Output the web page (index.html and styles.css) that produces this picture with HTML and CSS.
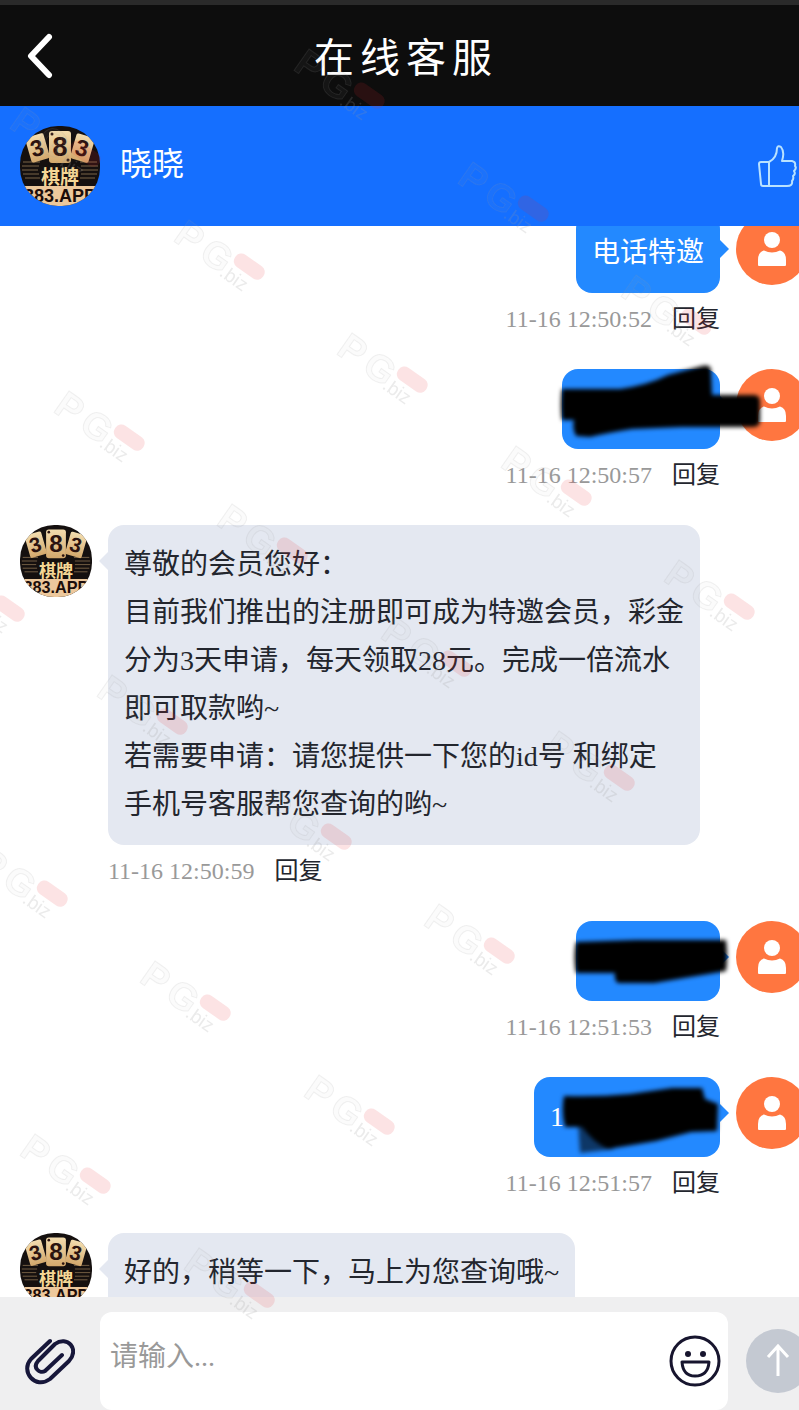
FILE: index.html
```
<!DOCTYPE html>
<html lang="zh-CN">
<head>
    <meta charset="utf-8">
    <title>在线客服</title>
    <meta name="viewport" content="width=device-width, initial-scale=1">
    <link rel="stylesheet" href="styles.css">
</head>
<body>

<!-- shared symbols -->
<svg class="defs" aria-hidden="true">
  <defs>
    <clipPath id="round"><rect x="0" y="0" width="80" height="80" rx="38"/></clipPath>
    <linearGradient id="gold" x1="0" y1="0" x2="0" y2="1">
      <stop offset="0" stop-color="#f3dcae"/>
      <stop offset="1" stop-color="#d3a86c"/>
    </linearGradient>
    <symbol id="logo" viewBox="0 0 80 80">
      <g clip-path="url(#round)">
        <rect width="80" height="80" fill="#15100f"/>
        <g stroke="#7b6448" stroke-width="1">
          <path d="M3 36h17M2 40h17M2 44h16M3 48h16M5 52h15M60 36h17M61 40h17M61 44h17M61 48h16M60 52h15"/>
        </g>
        <g fill="url(#gold)">
          <rect x="8" y="9" width="19" height="26" rx="2" transform="rotate(-16 17 22)"/>
          <rect x="53" y="9" width="19" height="26" rx="2" transform="rotate(16 62 22)"/>
          <rect x="29" y="5" width="22" height="32" rx="3"/>
        </g>
        <g class="logo-num" fill="#2b1310">
          <text x="17" y="30" font-size="23" transform="rotate(-16 17 22)">3</text>
          <text x="40" y="30" font-size="27">8</text>
          <text x="62" y="30" font-size="23" transform="rotate(16 62 22)">3</text>
        </g>
        <circle cx="32" cy="8" r="1.500" fill="#2b1310"/>
        <circle cx="48" cy="34" r="1.500" fill="#2b1310"/>
        <text class="logo-cn" x="40" y="58" font-size="19">棋牌</text>
        <rect y="60" width="80" height="20" fill="#edc89c"/>
        <text class="logo-num" x="40" y="76" font-size="18" fill="#1c0d0a">383.APP</text>
      </g>
    </symbol>
    <symbol id="user" viewBox="0 0 72 72">
      <circle cx="36" cy="36" r="36" fill="#ff7640"/>
      <circle cx="36" cy="27" r="8" fill="#fff"/>
      <path d="M22 52V47q0-8 6-9.500q8 4 16 0q6 1.500 6 9.500v5q0 1-1 1H23q-1 0-1-1z" fill="#fff"/>
    </symbol>
    <g id="mark">
      <g transform="translate(2 25) rotate(35)">
        <text class="mark-pg" x="0" y="0">P</text>
        <text class="mark-pg" x="31" y="0">G</text>
        <text class="mark-biz" x="58" y="2">.biz</text>
      </g>
      <rect x="62" y="44" width="34" height="15" rx="7" transform="rotate(35 79 52)" fill="#e8242c" fill-opacity=".13"/>
    </g>
  </defs>
</svg>

<div class="app">
  <header class="topbar">
    <button class="back" type="button" aria-label="返回">
      <svg width="26" height="46" viewBox="0 0 26 46"><path d="M22 4L4 23L22 42" fill="none" stroke="#fff" stroke-width="6" stroke-linecap="round" stroke-linejoin="round"/></svg>
    </button>
    <h1>在线客服</h1>
  </header>

  <div class="agent">
    <svg class="agent-pic"><use href="#logo"/></svg>
    <span class="agent-name">晓晓</span>
    <button class="like" type="button" aria-label="点赞">
      <svg width="40" height="44" viewBox="0 0 40 44" fill="none" stroke="#b9e2ff" stroke-width="2" stroke-linejoin="round">
        <path d="M1 20Q1 18 3 18H11V42H5Q3 42 3 40z"/>
        <path d="M11 18Q19 14 19 4Q20 1 23 3Q27 8 24 17H34Q38 18 37 22Q39 24 36 27Q38 30 35 32Q36 35 34 37Q35 42 29 42H11"/>
      </svg>
    </button>
  </div>

  <main class="chat">
    <ul class="list">
      <li class="msg mine">
        <svg class="pic"><use href="#user"/></svg>
        <div class="body">
          <div class="bubble">电话特邀</div>
          <div class="meta"><time>11-16 12:50:52</time><button type="button">回复</button></div>
        </div>
      </li>
      <li class="msg mine">
        <svg class="pic"><use href="#user"/></svg>
        <div class="body">
          <div class="bubble medium">
            <svg class="scribble" viewBox="0 0 158 80"><path d="M0 20H58Q86 16 106 6L140-3Q149-5 149 2L150 26H192Q198 26 198 32V52Q198 58 190 58H120L70 60Q44 64 28 68L14 67Q10 60 12 51H0Q-2 36 0 20z"/></svg>
          </div>
          <div class="meta"><time>11-16 12:50:57</time><button type="button">回复</button></div>
        </div>
      </li>
      <li class="msg">
        <svg class="pic"><use href="#logo"/></svg>
        <div class="body">
          <div class="bubble">尊敬的会员您好：<br>目前我们推出的注册即可成为特邀会员，彩金分为3天申请，每天领取28元。完成一倍流水即可取款哟~<br>若需要申请：请您提供一下您的id号 和绑定手机号客服帮您查询的哟~</div>
          <div class="meta"><time>11-16 12:50:59</time><button type="button">回复</button></div>
        </div>
      </li>
      <li class="msg mine">
        <svg class="pic"><use href="#user"/></svg>
        <div class="body">
          <div class="bubble short">
            <svg class="scribble" viewBox="0 0 144 80"><path d="M0 21L60 19H150Q152 36 150 50L108 57L78 62H42Q38 60 39 52H0Q-3 36 0 21z"/></svg>
          </div>
          <div class="meta"><time>11-16 12:51:53</time><button type="button">回复</button></div>
        </div>
      </li>
      <li class="msg mine">
        <svg class="pic"><use href="#user"/></svg>
        <div class="body">
          <div class="bubble long">1
            <svg class="scribble" viewBox="0 0 186 80"><path fill-opacity=".6" d="M44 46L46 76L80 72L66 48z"/><path d="M30 19Q64 20 96 17L138 11H168L171 22L184 27L183 54L157 55L122 64L74 72Q60 66 48 50H31Q27 34 30 19z"/></svg>
          </div>
          <div class="meta"><time>11-16 12:51:57</time><button type="button">回复</button></div>
        </div>
      </li>
      <li class="msg">
        <svg class="pic"><use href="#logo"/></svg>
        <div class="body">
          <div class="bubble">好的，稍等一下，马上为您查询哦~</div>
        </div>
      </li>
    </ul>
  </main>

  <form class="composer">
    <button class="attach" type="button" aria-label="附件">
      <svg width="50" height="48" viewBox="0 0 50 48" fill="none" stroke="#17173a" stroke-width="4" stroke-linecap="round" stroke-linejoin="round">
        <path d="M25 4L6 22C-5 34 10 53 25 42L44 24C55 12 42-2 30 7L13 24C7 31 15 37 20 34L37 18"/>
      </svg>
    </button>
    <div class="field">
      <textarea aria-label="消息" placeholder="请输入..."></textarea>
      <button class="emoji" type="button" aria-label="表情">
        <svg width="52" height="52" viewBox="0 0 52 52" fill="none" stroke="#17152e" stroke-width="3">
          <circle cx="26" cy="26" r="24"/>
          <path d="M13 27H40Q39 41 26 41Q14 41 13 27z" stroke-linejoin="round"/>
          <g fill="#17152e" stroke="none"><circle cx="19" cy="19" r="3"/><circle cx="34" cy="19" r="3"/></g>
        </svg>
      </button>
    </div>
    <button class="send" type="submit" aria-label="发送">
      <svg width="64" height="64" viewBox="0 0 64 64" fill="none" stroke="#fff" stroke-width="3"><path d="M32 47V18M22 28L32 17L42 28"/></svg>
    </button>
  </form>
</div>

<!-- watermark -->
<svg class="watermark" aria-hidden="true">
  <use href="#mark" x="290" y="44"/><use href="#mark" x="454" y="157"/><use href="#mark" x="617" y="270"/>
  <use href="#mark" x="6" y="102"/><use href="#mark" x="170" y="215"/><use href="#mark" x="333" y="328"/><use href="#mark" x="497" y="441"/><use href="#mark" x="660" y="555"/>
  <use href="#mark" x="50" y="386"/><use href="#mark" x="213" y="499"/><use href="#mark" x="377" y="612"/><use href="#mark" x="540" y="726"/>
  <use href="#mark" x="-70" y="557"/><use href="#mark" x="93" y="670"/><use href="#mark" x="257" y="785"/><use href="#mark" x="420" y="899"/>
  <use href="#mark" x="-27" y="842"/><use href="#mark" x="136" y="956"/><use href="#mark" x="300" y="1070"/>
  <use href="#mark" x="16" y="1129"/><use href="#mark" x="180" y="1243"/>
</svg>

</body>
</html>
```
FILE: styles.css
```
* {
	box-sizing: border-box;
}

body {
	margin: 0;
	overflow: hidden;
	font-family: "Liberation Serif", "Noto Sans CJK SC", serif;
	color: #23262e;
	background: #fff;
}

button {
	padding: 0;
	border: 0;
	background: none;
	font: inherit;
	color: inherit;
	cursor: pointer;
}

svg {
	display: block;
}

.defs {
	position: absolute;
	width: 0;
	height: 0;
}

/* the panel runs a little past the right edge */
.app {
	display: flex;
	flex-direction: column;
	width: calc(100% + 9px);
	height: 100vh;
}

.topbar {
	display: grid;
	grid-template-columns: 80px 1fr 76px;
	align-items: center;
	height: 106px;
	border-top: 5px solid #2a2a2a;
	background: #0d0d0d;
	color: #fff;
}

.back {
	justify-self: center;
}

.topbar h1 {
	margin: 0;
	padding-top: 6px;
	font-size: 40px;
	font-weight: normal;
	letter-spacing: 6px;
	line-height: 60px;
	text-align: center;
}

.agent {
	display: flex;
	align-items: center;
	gap: 20px;
	height: 120px;
	padding: 0 10px 0 20px;
	background: #156fff;
	color: #fff;
}

.agent-pic {
	width: 80px;
	height: 80px;
}

.agent-name {
	flex: 1;
	padding-bottom: 4px;
	font-size: 32px;
	line-height: 48px;
}

.chat {
	flex: 1;
	min-height: 0;
	overflow: hidden;
}

/* scrolled so the first message is partly hidden */
.list {
	margin: -13px 0 0;
	padding: 0;
	list-style: none;
}

.msg {
	display: flex;
	gap: 16px;
	padding-left: 20px;
	margin-bottom: 32px;
}

.msg.mine {
	flex-direction: row-reverse;
}

.pic {
	flex: none;
	width: 72px;
	height: 72px;
}

.body {
	display: flex;
	flex-direction: column;
	align-items: flex-start;
}

.mine .body {
	align-items: flex-end;
}

.bubble {
	position: relative;
	max-width: 592px;
	min-height: 80px;
	padding: 16px;
	border-radius: 16px;
	background: #e4e8f1;
	font-size: 28px;
	line-height: 48px;
}

.bubble::before {
	content: "";
	position: absolute;
	top: 27px;
	left: -9px;
	border: 9px solid transparent;
	border-left: 0;
	border-right-color: #e4e8f1;
}

.mine .bubble {
	background: #2389ff;
	color: #fff;
}

.mine .bubble::before {
	left: auto;
	right: -9px;
	border: 9px solid transparent;
	border-right: 0;
	border-left-color: #2389ff;
}

.bubble.short {
	width: 144px;
}

.bubble.medium {
	width: 158px;
}

.bubble.long {
	width: 186px;
}

.scribble {
	position: absolute;
	top: 0;
	left: 0;
	width: 100%;
	height: 100%;
	overflow: visible;
	filter: blur(2px);
}

.meta {
	display: flex;
	gap: 20px;
	margin-top: 8px;
	font-size: 24px;
	line-height: 36px;
}

.meta time {
	color: #999;
}

.composer {
	display: flex;
	height: 113px;
	padding-top: 15px;
	background: #efeff0;
}

.attach {
	display: flex;
	justify-content: center;
	align-items: center;
	width: 100px;
}

.field {
	display: flex;
	flex: 1;
	align-items: center;
	padding-right: 7px;
	border-radius: 12px;
	background: #fff;
}

.field textarea {
	flex: 1;
	min-width: 0;
	height: 98px;
	padding: 21px 10px;
	border: 0;
	outline: 0;
	resize: none;
	background: none;
	font: inherit;
	font-size: 28px;
	line-height: 48px;
}

.field textarea::placeholder {
	color: #999;
}

.send {
	align-self: center;
	width: 64px;
	height: 64px;
	margin: 0 -2px 0 18px;
	border-radius: 50%;
	background: #c4c9d2;
}

.logo-num {
	font-family: "Liberation Sans", sans-serif;
	font-weight: bold;
	text-anchor: middle;
}

.logo-cn {
	font-family: "Noto Sans CJK SC", sans-serif;
	font-weight: bold;
	text-anchor: middle;
	fill: #f5d795;
}

.watermark {
	position: fixed;
	top: 0;
	left: 0;
	width: 100%;
	height: 100%;
	pointer-events: none;
}

.mark-pg {
	font: bold 38px "Liberation Sans", sans-serif;
	fill: #aaa;
	fill-opacity: .05;
	stroke: #999;
	stroke-opacity: .14;
}

.mark-biz {
	font: 19px "Liberation Sans", sans-serif;
	fill: #999;
	fill-opacity: .2;
}
```
